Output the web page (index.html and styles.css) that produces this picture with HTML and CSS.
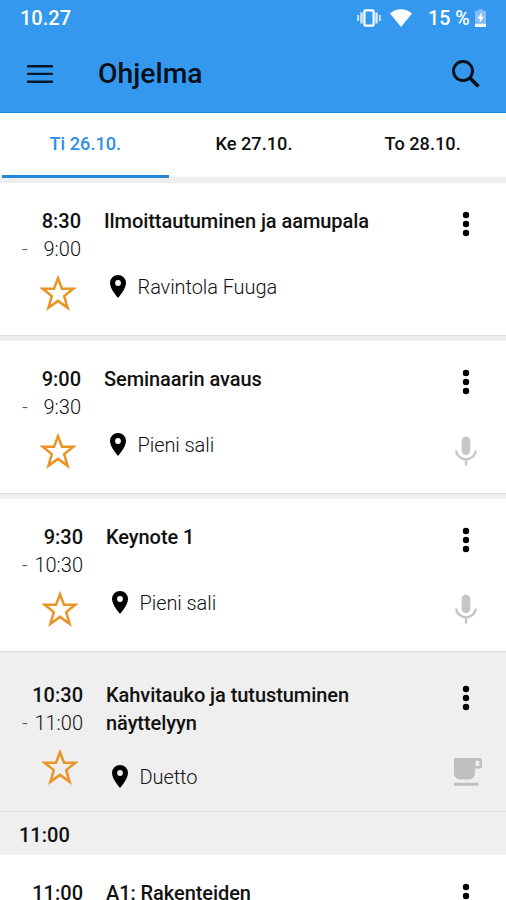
FILE: index.html
```html
<!DOCTYPE html>
<html lang="fi">
<head>
<meta charset="utf-8">
<title>Ohjelma</title>
<link rel="stylesheet" href="styles.css">
</head>
<body>
<svg class="defs" width="0" height="0">
  <symbol id="star" viewBox="0 0 36 36"><path d="M18 3.300l4 10.500h11.200l-9 7.300 3.400 11.700-9.600-6.900-9.600 6.900 3.400-11.700-9-7.300h11.200z" fill="none" stroke="#ea9425" stroke-width="2.500"/></symbol>
  <symbol id="pin" viewBox="0 0 16 23"><path fill-rule="evenodd" d="M8 0a8 8 0 0 0-8 8c0 6 8 15 8 15s8-9 8-15a8 8 0 0 0-8-8zm0 5.1a2.9 2.9 0 1 1 0 5.8 2.9 2.9 0 0 1 0-5.8z"/></symbol>
  <symbol id="dots" viewBox="0 0 8 26"><circle cx="4" cy="4" r="3.2"/><circle cx="4" cy="13" r="3.2"/><circle cx="4" cy="22" r="3.2"/></symbol>
  <symbol id="mic" viewBox="0 0 22 30"><rect x="6.7" y="0.5" width="8.6" height="18.5" rx="4.3" fill="#c6c6c6"/><path d="M1.3 14.5a9.7 8.8 0 0 0 19.4 0M11 23.5v6" fill="none" stroke="#c6c6c6" stroke-width="2.3"/></symbol>
  <symbol id="cup" viewBox="0 0 28 28"><path fill="#bfbfbf" fill-rule="evenodd" d="M0 0h25.500a2.500 2.500 0 0 1 2.500 2.500v5.500a2.500 2.500 0 0 1-2.500 2.500h-4.500v5a6 6 0 0 1-6 6h-9a6 6 0 0 1-6-6zM21.500 2.700v5.200h3.800v-5.200zM0 24.800h24.500v3h-24.500z"/></symbol>
</svg>
<div class="screen">
  <header class="header">
    <div class="status">
      <span class="clock">10.27</span>
      <svg class="vibrate" viewBox="0 0 24 18"><rect x="7.400" y="1.300" width="9.200" height="15.400" rx="1.200" fill="none" stroke="#fff" stroke-width="2.200"/><path d="M4.500 3.500v11M19.500 3.500v11" stroke="#d9ebfc" stroke-width="2.400"/><path d="M1.200 6v6M22.800 6v6" stroke="#d9ebfc" stroke-width="1.800"/></svg>
      <svg class="wifi" viewBox="0 0 22 18"><path fill="#fff" d="M0 4.500C6-1.300 16-1.300 22 4.500L11 18z"/></svg>
      <span class="percent">15 %</span>
      <svg class="battery" viewBox="0 0 11 18"><path fill="#86c0f4" d="M3.500 0h4v1.800h2.500a1 1 0 0 1 1 1v11h-11v-11a1 1 0 0 1 1-1h2.500z"/><path fill="#fff" d="M6.500 3.500L2.500 9.700h2.300v4.300l4-6.300h-2.300zM0 14.500h11v3.500h-11z"/></svg>
    </div>
    <div class="bar">
      <svg class="menu" viewBox="0 0 26 18"><path d="M0 1.200h26M0 8.900h26M0 16.700h26" stroke="#06182a" stroke-width="2.400"/></svg>
      <h1>Ohjelma</h1>
      <svg class="search" viewBox="0 0 28 28"><circle cx="11" cy="11" r="9.500" fill="none" stroke="#06101a" stroke-width="2.900"/><path d="M17.500 17.500l8.900 8.900" stroke="#06101a" stroke-width="3.600"/></svg>
    </div>
  </header>
  <nav class="tabs">
    <a class="tab active">Ti 26.10.</a>
    <a class="tab">Ke 27.10.</a>
    <a class="tab">To 28.10.</a>
  </nav>
  <main>
    <article class="card">
      <div class="when"><b>8:30</b><span class="end"><i>-</i>9:00</span><svg class="star"><use href="#star"/></svg></div>
      <div class="what"><h2>Ilmoittautuminen ja aamupala</h2><p><svg class="pin"><use href="#pin"/></svg>Ravintola Fuuga</p></div>
      <div class="side"><svg class="dots"><use href="#dots"/></svg></div>
    </article>
    <article class="card">
      <div class="when"><b>9:00</b><span class="end"><i>-</i>9:30</span><svg class="star"><use href="#star"/></svg></div>
      <div class="what"><h2>Seminaarin avaus</h2><p><svg class="pin"><use href="#pin"/></svg>Pieni sali</p></div>
      <div class="side"><svg class="dots"><use href="#dots"/></svg><svg class="mic"><use href="#mic"/></svg></div>
    </article>
    <article class="card wide">
      <div class="when"><b>9:30</b><span class="end"><i>-</i>10:30</span><svg class="star"><use href="#star"/></svg></div>
      <div class="what"><h2>Keynote 1</h2><p><svg class="pin"><use href="#pin"/></svg>Pieni sali</p></div>
      <div class="side"><svg class="dots"><use href="#dots"/></svg><svg class="mic"><use href="#mic"/></svg></div>
    </article>
    <article class="card wide break">
      <div class="when"><b>10:30</b><span class="end"><i>-</i>11:00</span><svg class="star"><use href="#star"/></svg></div>
      <div class="what"><h2>Kahvitauko ja tutustuminen<br>näyttelyyn</h2><p><svg class="pin"><use href="#pin"/></svg>Duetto</p></div>
      <div class="side"><svg class="dots"><use href="#dots"/></svg><svg class="cup"><use href="#cup"/></svg></div>
    </article>
    <h3 class="slot">11:00</h3>
    <article class="card wide">
      <div class="when"><b>11:00</b></div>
      <div class="what"><h2>A1: Rakenteiden</h2></div>
      <div class="side"><svg class="dots"><use href="#dots"/></svg></div>
    </article>
  </main>
</div>
</body>
</html>
```

FILE: styles.css
```css
* { box-sizing: border-box; }
body { margin: 0; background: #efefef; color: #111; font-family: Roboto, "Liberation Sans", sans-serif; }
h1, h2, h3, p { margin: 0; }
svg { display: block; flex: none; }
.defs { position: absolute; }
.screen { height: 900px; overflow: hidden; }

.header { height: 113px; background: #3499ee; border-bottom: 1px solid #1585e0; }
.status { display: flex; align-items: center; height: 36px; padding: 0 20px; color: #fff; font-size: 20px; font-weight: 500; }
.clock { flex: 1; }
.vibrate { width: 24px; height: 18px; margin-right: 9px; }
.wifi { width: 22px; height: 18px; margin-right: 16px; }
.percent { width: 42px; white-space: nowrap; font-size: 19.600px; }
.battery { width: 11px; height: 18px; margin-left: 5px; }
.bar { display: flex; align-items: center; height: 76px; padding: 0 26px 0 27px; }
.menu { width: 26px; height: 18px; }
.bar h1 { flex: 1; margin: -2px 0 0 45px; color: #06101a; font-size: 28.3px; font-weight: 500; }
.search { width: 28px; height: 28px; }

.tabs { display: grid; grid-template-columns: repeat(3, 1fr); height: 64px; background: #fff; margin-bottom: 6px; }
.tab { padding-left: 2px; line-height: 62px; text-align: center; font-size: 18.2px; font-weight: 500; }
.active { padding-left: 0; color: #2e91e2; border-bottom: 3px solid #2488d9; margin-left: 2px; }

.card { display: grid; grid-template-columns: 81px 1fr 80px; column-gap: 23px; height: 153px; margin-bottom: 5px; padding-top: 24px; background: #fff; border-bottom: 1px solid #dedede; }
.wide { grid-template-columns: 83px 1fr 80px; }
.break { background: none; height: 155px; margin-bottom: 0; }
.when { display: flex; flex-direction: column; align-items: flex-end; font-size: 20px; line-height: 28px; }
.when b { font-weight: 500; }
.end { display: flex; justify-content: space-between; width: 100%; padding-left: 22px; font-weight: 300; }
.end i { font-style: normal; color: #555; }
.star { width: 36px; height: 36px; margin: 12px 5px 0 0; }
.what { line-height: 28px; white-space: nowrap; }
.what h2 { font-size: 20px; font-weight: 500; line-height: 28px; letter-spacing: -0.07px; }
.what p { display: flex; align-items: center; margin-top: 38px; font-size: 20px; font-weight: 300; letter-spacing: -0.08px; }
.break .what p { margin-top: 26px; }
.pin { width: 16px; height: 23px; margin: -2px 12px 0 5px; }
.what p { padding-left: 0.500px; }
.side { display: flex; flex-direction: column; align-items: center; padding-top: 4px; }
.dots { width: 8px; height: 26px; }
.mic { width: 22px; height: 30px; margin-top: 41px; }
.cup { width: 28px; height: 28px; margin: 47px 0 0 3px; }
.slot { height: 43px; padding-left: 19px; font-size: 20px; font-weight: 500; line-height: 47px; }
```
